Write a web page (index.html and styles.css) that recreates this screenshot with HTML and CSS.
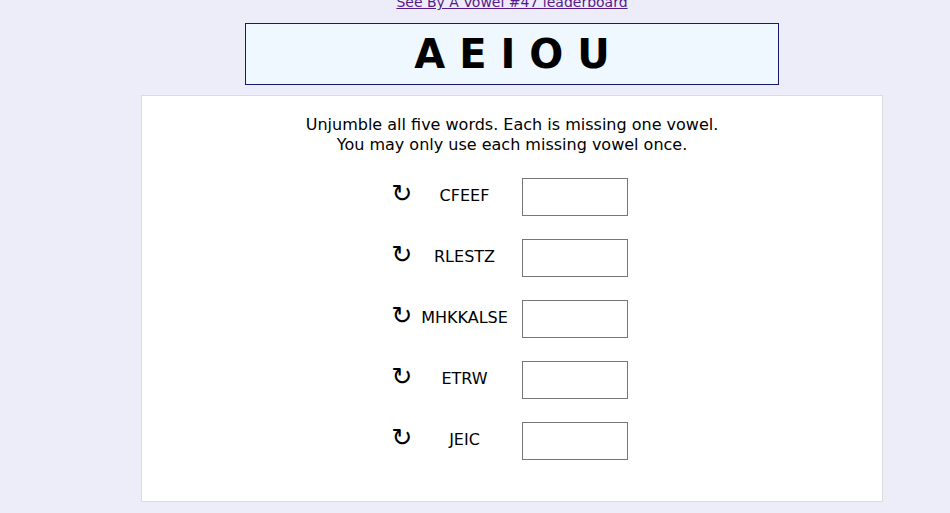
FILE: index.html
```html
<!DOCTYPE html>
<html lang="en">
<head>
    <meta charset="UTF-8">
    <meta name="viewport" content="width=device-width, initial-scale=1.0">
    <title>By A Vowel #47</title>
    <link rel="stylesheet" href="styles.css">
</head>
<body>
    <div class="page">
        <a class="top-link" href="#">See By A Vowel #47 leaderboard</a>

        <div class="title">A E I O U</div>

        <div class="card">
            <p class="intro">Unjumble all five words. Each is missing one vowel.<br>You may only use each missing vowel once.</p>

            <div class="words">
                <span class="shuffle">&#8635;</span>
                <span class="word">CFEEF</span>
                <input type="text" class="answer">

                <span class="shuffle">&#8635;</span>
                <span class="word">RLESTZ</span>
                <input type="text" class="answer">

                <span class="shuffle">&#8635;</span>
                <span class="word">MHKKALSE</span>
                <input type="text" class="answer">

                <span class="shuffle">&#8635;</span>
                <span class="word">ETRW</span>
                <input type="text" class="answer">

                <span class="shuffle">&#8635;</span>
                <span class="word">JEIC</span>
                <input type="text" class="answer">
            </div>
        </div>
    </div>
</body>
</html>
```

FILE: styles.css
```css
body {
    margin: 0;
    background-color: #ededf9;
    font-family: "DejaVu Sans", Verdana, sans-serif;
    color: #000;
    overflow: hidden;
}

.page {
    width: 742px;
    margin-left: 141px;
}

.top-link {
    display: block;
    margin-top: -6px;
    font-size: 14px;
    line-height: 16px;
    text-align: center;
    color: #551a8b;
}

.title {
    width: 532px;
    height: 60px;
    margin: 13px auto 10px;
    background-color: #f0f8ff;
    border: 1px solid #191970;
    font-size: 40px;
    font-weight: bold;
    line-height: 60px;
    text-align: center;
}

.card {
    background-color: #fff;
    border: 1px solid #dcdcdc;
    padding: 19px 0 41px;
}

.intro {
    margin: 0 0 23px;
    font-size: 16px;
    line-height: 20px;
    text-align: center;
}

.words {
    display: grid;
    grid-template-columns: 28px 97px 115px;
    grid-auto-rows: 38px;
    row-gap: 23px;
    align-items: center;
    width: 240px;
    padding-right: 8px;
    margin: 0 auto;
}

.shuffle {
    font-size: 25px;
    line-height: 26px;
    text-align: center;
    margin-top: -6px;
    cursor: pointer;
}

.word {
    font-size: 16px;
    text-align: center;
    margin-top: -3px;
}

.answer {
    box-sizing: border-box;
    justify-self: end;
    width: 106px;
    height: 38px;
    border: 1px solid #767676;
    font-size: 16px;
}
```
